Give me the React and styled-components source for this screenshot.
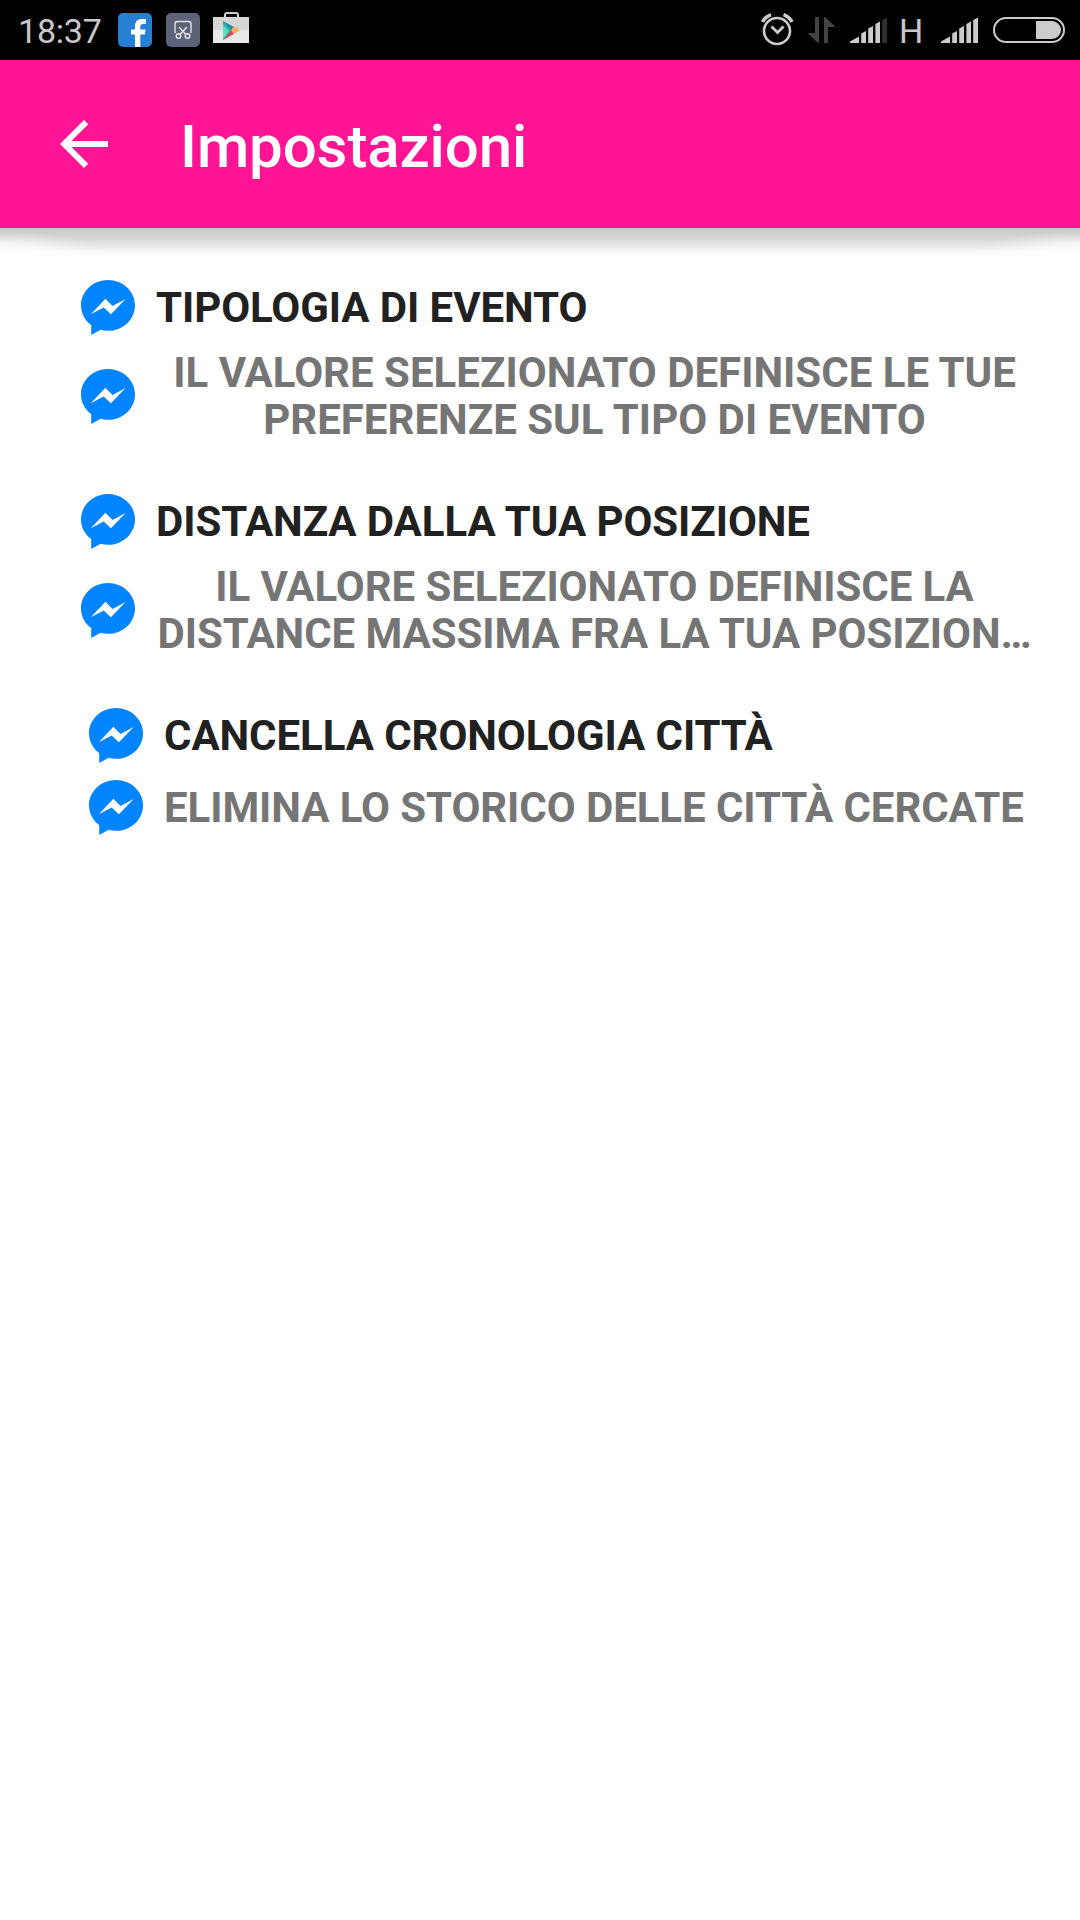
import React from "react";
import styled, { createGlobalStyle } from "styled-components";

const GlobalStyle = createGlobalStyle`
  * { box-sizing: border-box; }
  body { margin: 0; background: #fff; font-family: Roboto, "Liberation Sans", sans-serif; }
`;

const Screen = styled.div`
  width: 1080px;
  height: 1920px;
  display: flex;
  flex-direction: column;
  background: #fff;
  overflow: hidden;
`;

const StatusBar = styled.header`
  height: 60px;
  flex: none;
  display: flex;
  align-items: center;
  justify-content: space-between;
  background: #000;
  color: #c8c8c8;
  padding: 0 15px 0 18px;
`;

const StatusGroup = styled.div`
  display: flex;
  align-items: center;
  height: 60px;
`;

const Clock = styled.span`
  width: 100px;
  font-size: 34px;
  line-height: 60px;
  letter-spacing: -0.2px;
  padding-top: 2px;
`;

const Network = styled.span`
  width: 26px;
  font-size: 34px;
  line-height: 60px;
  padding-top: 2px;
  margin-left: 11px;
`;

const Glyph = styled.svg`
  display: block;
  flex: none;
  width: ${(p) => p.$w}px;
  height: ${(p) => p.$h || 60}px;
  margin-left: ${(p) => p.$gap || 0}px;
`;

const AppBar = styled.div`
  height: 168px;
  flex: none;
  display: flex;
  align-items: flex-start;
  background: #ff1493;
  color: #fff;
  padding: 48px 0 0 48px;
`;

const BackButton = styled.button`
  width: 72px;
  height: 72px;
  padding: 0;
  border: 0;
  background: none;
  color: inherit;
`;

const Title = styled.h1`
  margin: 0 0 0 60px;
  font-size: 60px;
  font-weight: 500;
  line-height: 78px;
  letter-spacing: -0.1px;
`;

const BarShadow = styled.div`
  height: 32px;
  flex: none;
  background:
    radial-gradient(ellipse 110px 30px at 0 100%, #fff 10%, rgba(255, 255, 255, 0.75) 45%, rgba(255, 255, 255, 0.2) 80%, rgba(255, 255, 255, 0) 100%),
    radial-gradient(ellipse 110px 30px at 100% 100%, #fff 10%, rgba(255, 255, 255, 0.75) 45%, rgba(255, 255, 255, 0.2) 80%, rgba(255, 255, 255, 0) 100%),
    linear-gradient(#c9c9c9 0, #cecece 5px, #dadada 12px, #e5e5e5 17px, #f6f6f6 23px, #fdfdfd 28px, #fff 32px);
`;

const Settings = styled.main`
  flex: 1;
  display: flex;
  flex-direction: column;
  padding-top: 11px;
`;

const Preference = styled.section`
  height: 214px;
  flex: none;
  padding-left: ${(p) => p.$indent}px;
`;

const Row = styled.div`
  display: flex;
  align-items: center;
  height: ${(p) => p.$h}px;
`;

const Label = styled.div`
  width: 877px;
  margin-left: 20px;
  flex: none;
  font-size: 42px;
  font-weight: 700;
  line-height: 47px;
  letter-spacing: ${(p) => p.$tracking || 0}px;
  text-transform: uppercase;
  text-align: ${(p) => (p.$center ? "center" : "left")};
  color: ${(p) => (p.$muted ? "#757575" : "#212121")};
`;

const MessengerIcon = () => (
  <Glyph $w={55} $h={55} viewBox="0 0 55 55">
    <path fill="#0084ff" d="M27 0C12.1 0 0 11.4 0 25.4c0 8 4 15.100 10.200 19.600V55l9.400-5.200c2.400.7 4.900 1 7.400 1 14.900 0 27-11.400 27-25.400S41.900 0 27 0z" />
    <path fill="#fff" d="M9.800 34.300 24.400 18.800 31.500 26 44.600 18.900 29.900 34.300 22.700 27.400z" />
  </Glyph>
);

const AlarmIcon = () => (
  <Glyph $w={34} viewBox="0 0 34 60">
    <g fill="none" stroke="#ccc">
      <circle cx="17" cy="31" r="13" strokeWidth="2.600" />
      <path d="M11.500 26.500 17.500 32.500 23.500 26.500" strokeWidth="2.800" />
      <path d="M2.500 22Q5 17 11 14.700M32 22Q29.500 17 23.500 14.700" strokeWidth="3.400" />
    </g>
  </Glyph>
);

const DataIcon = () => (
  <Glyph $w={28} $gap={14} viewBox="0 0 28 60">
    <path fill="#434343" d="M7 17H11V43H10L0 33.500V33H7zM16 43V17H17L27.300 26.500V27H20V43z" />
  </Glyph>
);

const SignalIcon = ({ dim, gap }) => (
  <Glyph $w={38} $gap={gap} viewBox="0 0 38 60">
    <g fill="#ccc">
      <path d="M0 43V41.500L9 36.500V43zM11.200 43V33.500L16 31V43zM18.200 43V28.500L23 26V43zM25.400 43V24L30 21.500V43z" />
      <path fill={dim ? "#303030" : "#ccc"} d="M32.200 43V20L37 17.500V43z" />
    </g>
  </Glyph>
);

const BatteryIcon = () => (
  <Glyph $w={72} $gap={14} viewBox="0 0 72 60">
    <rect x="1" y="18" width="70" height="24" rx="12" fill="none" stroke="#ccc" strokeWidth="2" />
    <path fill="#ccc" d="M43 21H59a9 9 0 0 1 0 18H43z" />
  </Glyph>
);

const FacebookIcon = () => (
  <Glyph $w={34} viewBox="0 0 34 60">
    <rect y="13" width="34" height="34" rx="5" fill="#257fd2" />
    <path fill="#fff" d="M17 47V34.500H13V29.500H17V26.500C17 21.300 19.500 19 24 19H28V24H25.500C23 24 22.300 25 22.300 27V29.500H27.500L26.800 34.500H22.300V47z" />
  </Glyph>
);

const CaptureIcon = () => (
  <Glyph $w={34} $gap={14} viewBox="0 0 34 60">
    <rect y="13" width="34" height="34" rx="5" fill="#5c6278" />
    <g fill="none" stroke="#e4e5e9" strokeWidth="1.400">
      <path d="M9 33V24Q9 21.500 11.500 21.500H22.500Q25 21.500 25 24V33M13 27 20 34.500M21 27 14 34.500" />
      <circle cx="12.500" cy="36" r="2.300" />
      <circle cx="21.500" cy="36" r="2.300" />
    </g>
  </Glyph>
);

const PlayStoreIcon = () => (
  <Glyph $w={36} $gap={13} viewBox="0 0 36 60">
    <path d="M12 18V15Q12 13 14 13H23Q25 13 25 15V18" fill="none" stroke="#ccc" strokeWidth="2" />
    <path fill="#d5d5d5" d="M0 17H36V30H0z" />
    <path fill="#e8e8e8" d="M0 30H36V43H0z" />
    <path fill="#27b5a9" d="M10 21 21 30 10 40z" />
    <path fill="#238f9c" d="M10 21 21 27 18 30z" />
    <path fill="#5ce0bd" d="M10 25 16 31 10 39z" />
    <path fill="#f8ae62" d="M21 26 27 30.500 21 34 18 30.500z" />
    <path fill="#d84565" d="M18 30.500 21 34 10 40z" />
  </Glyph>
);

const preferences = [
  {
    title: "Tipologia di evento",
    summary: "Il valore selezionato definisce le tue preferenze sul tipo di evento",
    indent: 81,
    summaryHeight: 106,
    centered: true,
    tracking: 0,
  },
  {
    title: "Distanza dalla tua posizione",
    summary: "Il valore selezionato definisce la distance massima fra la tua posizion…",
    indent: 81,
    summaryHeight: 106,
    centered: true,
    tracking: -0.07,
  },
  {
    title: "Cancella cronologia città",
    summary: "Elimina lo storico delle città cercate",
    indent: 89,
    summaryHeight: 72,
    tracking: -0.08,
  },
];

export default function App() {
  return (
    <Screen>
      <GlobalStyle />
      <StatusBar>
        <StatusGroup>
          <Clock>18:37</Clock>
          <FacebookIcon />
          <CaptureIcon />
          <PlayStoreIcon />
        </StatusGroup>
        <StatusGroup>
          <AlarmIcon />
          <DataIcon />
          <SignalIcon dim gap={14} />
          <Network>H</Network>
          <SignalIcon gap={16} />
          <BatteryIcon />
        </StatusGroup>
      </StatusBar>
      <AppBar>
        <BackButton aria-label="Indietro">
          <Glyph $w={72} $h={72} viewBox="0 0 24 24">
            <path fill="#fff" d="M20 11H7.830l5.590-5.590L12 4l-8 8 8 8 1.410-1.410L7.830 13H20v-2z" />
          </Glyph>
        </BackButton>
        <Title>Impostazioni</Title>
      </AppBar>
      <BarShadow />
      <Settings>
        {preferences.map((p) => (
          <Preference key={p.title} $indent={p.indent}>
            <Row $h={72}>
              <MessengerIcon />
              <Label $tracking={-0.08}>{p.title}</Label>
            </Row>
            <Row $h={p.summaryHeight}>
              <MessengerIcon />
              <Label $muted $center={p.centered} $tracking={p.tracking}>{p.summary}</Label>
            </Row>
          </Preference>
        ))}
      </Settings>
    </Screen>
  );
}
